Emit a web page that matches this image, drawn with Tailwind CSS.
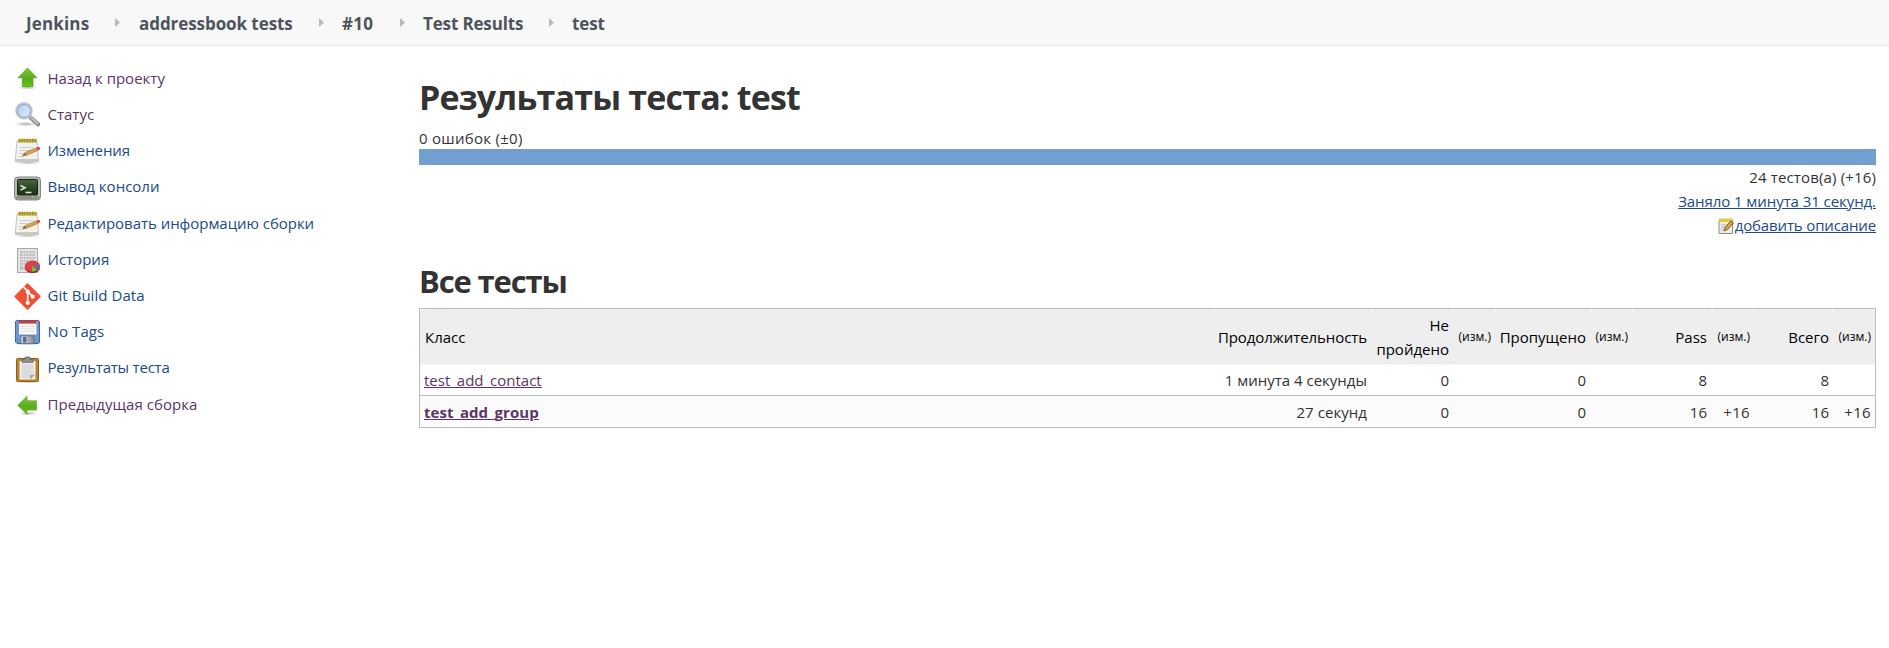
<!DOCTYPE html>
<html lang="ru">
<head>
<meta charset="utf-8">
<title>Результаты теста: test</title>
<script src="https://cdn.jsdelivr.net/npm/@tailwindcss/browser@4"></script>
</head>
<body class="bg-white font-['Open_Sans','Noto_Sans',sans-serif] text-[15px] leading-6 text-[#333] whitespace-nowrap overflow-hidden">

<svg class="absolute size-0">
  <defs>
    <linearGradient id="green" x1="0" y1="0" x2="0" y2="1"><stop offset="0" stop-color="#7fc83a"/><stop offset=".55" stop-color="#5aac1c"/><stop offset="1" stop-color="#5cc60c"/></linearGradient>
    <linearGradient id="lens" x1="0" y1="0" x2="1" y2="1"><stop offset="0" stop-color="#a9c8ec"/><stop offset="1" stop-color="#e6f1fc"/></linearGradient>
    <linearGradient id="screen" x1="0" y1="0" x2="0" y2="1"><stop offset="0" stop-color="#49693a"/><stop offset=".5" stop-color="#2f4a26"/><stop offset="1" stop-color="#1c2f18"/></linearGradient>
    <linearGradient id="metal" x1="0" y1="0" x2="1" y2="0"><stop offset="0" stop-color="#dcdcdc"/><stop offset="1" stop-color="#8b8b8b"/></linearGradient>
    <radialGradient id="shade"><stop offset="0" stop-color="#000" stop-opacity=".3"/><stop offset="1" stop-color="#000" stop-opacity="0"/></radialGradient>
    <symbol id="notepad" viewBox="0 0 27 27">
      <ellipse cx="13.5" cy="24.8" rx="13" ry="1.6" fill="url(#shade)"/>
      <path d="M3 3h20l1.500 20.500H1.200z" fill="#f2f2ef" stroke="#b5b5b0" stroke-width=".8"/>
      <path d="M1.500 21h23v2.500h-23.200z" fill="#c9c9c4"/>
      <path d="M5.500 9.500h14M5.200 12.500h12M5 15.500h6M4.800 18.500h5" stroke="#cfcfcf" stroke-width="1"/>
      <rect x="4" y="1" width="19" height="3.600" rx=".5" fill="#c2b03c"/>
      <path d="M6 .5v4M8.500.5v4M11 .5v4M13.500.5v4M16 .5v4M18.500.5v4M21 .5v4" stroke="#94832a" stroke-width=".8"/>
      <path d="M8.500 17.700l2.300-3 11.700-4.900 1.300 2.600-11 4.800z" fill="#d9a552" stroke="#9a7030" stroke-width=".6"/>
      <path d="M8.500 17.700l2.300-3 1.600 2.500z" fill="#8a6a3a"/>
      <path d="M22.500 9.800l1.800-.8c1.500-.5 2.500 1.600 1.200 2.400l-1.700 1z" fill="#e0402e"/>
    </symbol>
  </defs>
</svg>

<header class="flex h-[46px] items-center border-b border-[#e8e8e8] bg-[#f8f8f8] pl-[26px] text-[17px] font-bold text-[#4d545d]">
  <span class="w-[89px] pt-[2px] tracking-[0.15px]">Jenkins</span>
  <svg class="mb-[1px] mr-[19px] h-[9px] w-[5px]" viewBox="0 0 5 9"><path d="M0 0l5 4.500-5 4.500z" fill="#b9b9b9"/></svg>
  <span class="w-[180px] pt-[2px] tracking-[-0.07px]">addressbook tests</span>
  <svg class="mb-[1px] mr-[18px] h-[9px] w-[5px]" viewBox="0 0 5 9"><path d="M0 0l5 4.500-5 4.500z" fill="#b9b9b9"/></svg>
  <span class="w-[58px] pt-[2px] tracking-[0.3px]">#10</span>
  <svg class="mb-[1px] mr-[18px] h-[9px] w-[5px]" viewBox="0 0 5 9"><path d="M0 0l5 4.500-5 4.500z" fill="#b9b9b9"/></svg>
  <span class="w-[126px] pt-[2px] tracking-[-0.15px]">Test Results</span>
  <svg class="mb-[1px] mr-[18px] h-[9px] w-[5px]" viewBox="0 0 5 9"><path d="M0 0l5 4.500-5 4.500z" fill="#b9b9b9"/></svg>
  <span class="pt-[2px] tracking-[-0.1px]">test</span>
</header>

<div class="flex">
  <nav class="flex w-[419px] shrink-0 flex-col pt-[15.500px] pl-[14px] text-[#204a87]">
    <a class="flex h-[36.200px] items-center gap-[6.500px] text-[#5c3566]">
      <svg class="size-[27px]" viewBox="0 0 27 27"><ellipse cx="13.500" cy="21.500" rx="10" ry="2" fill="url(#shade)"/><path d="M13.500 2L23 11.800h-4V20.500H8.300v-8.700H4z" fill="url(#green)" stroke="#5da02c" stroke-width=".8"/></svg>
      <span class="pb-[4px]">Назад к проекту</span></a>
    <a class="flex h-[36.200px] items-center gap-[6.500px] text-[#5c3566]">
      <svg class="size-[27px]" viewBox="0 0 27 27"><ellipse cx="12" cy="22" rx="11" ry="2.500" fill="url(#shade)"/><path d="M16.500 15.500l7.500 6.800" stroke="#858585" stroke-width="4.200" stroke-linecap="round"/><path d="M17 15.500l6.500 6" stroke="#c4c4c4" stroke-width="2" stroke-linecap="round"/><circle cx="10" cy="8.800" r="7.600" fill="url(#lens)" stroke="#c3c5c8" stroke-width="2.200"/><circle cx="10" cy="8.800" r="6.500" fill="none" stroke="#7fa6d8" stroke-width=".9"/></svg>
      <span class="pb-[4px]">Статус</span></a>
    <a class="flex h-[36.200px] items-center gap-[6.500px]">
      <svg class="size-[27px]"><use href="#notepad"/></svg>
      <span class="pb-[4px] tracking-[-0.1px]">Изменения</span></a>
    <a class="flex h-[36.200px] items-center gap-[6.500px]">
      <svg class="size-[27px]" viewBox="0 0 27 27"><rect x=".5" y="2" width="26" height="23" rx="3.500" fill="#b8b9b3" stroke="#83857e"/><path d="M2 21h23v1.500a2 2 0 0 1-2 2H4a2 2 0 0 1-2-2z" fill="#8d8f88"/><rect x="3.500" y="4.500" width="20" height="15.500" rx="1" fill="url(#screen)" stroke="#1a2416"/><path d="M6.500 10.500l4.500 2.300-4.500 2.300" fill="none" stroke="#d5ecc8" stroke-width="1.600"/><path d="M11.500 17.500h6" stroke="#d5ecc8" stroke-width="1.600"/><path d="M18.500 21v2" stroke="#8ae234" stroke-width="1"/></svg>
      <span class="pb-[4px]">Вывод консоли</span></a>
    <a class="flex h-[36.200px] items-center gap-[6.500px]">
      <svg class="size-[27px]"><use href="#notepad"/></svg>
      <span class="pb-[2px] tracking-[-0.04px]">Редактировать информацию сборки</span></a>
    <a class="flex h-[36.200px] items-center gap-[6.500px]">
      <svg class="size-[27px]" viewBox="0 0 27 27"><rect x="3.500" y="1.500" width="20" height="24" fill="#e4e4e2" stroke="#a9a9a6"/><rect x="6" y="4" width="15" height="19" fill="#bcbcba"/><path d="M6 6.500h15M6 9.500h15M6 12.500h15M6 15.500h15M6 18.500h15M9 4v19M12 4v19M15 4v19M18 4v19" stroke="#eaeaea" stroke-width=".8"/><ellipse cx="18.500" cy="20.500" rx="7.500" ry="5.500" fill="#a81e1e"/><ellipse cx="18.500" cy="19" rx="7.500" ry="5.500" fill="#dc4242"/><path d="M18.500 18.500L25.700 18.300c.3 2.500-1 4-2.700 5z" fill="#4a76b8"/><path d="M18.500 18.500l4.500 4.800c-1.500 1-3.500 1.200-5.200 1.200z" fill="#73c22a"/></svg>
      <span class="pb-[4px]">История</span></a>
    <a class="flex h-[36.200px] items-center gap-[6.500px]">
      <svg class="size-[27px]" viewBox="0 0 27 27"><rect x="3.900" y="3.900" width="19.200" height="19.200" rx="1.200" fill="#f05033" transform="rotate(45 13.500 13.500)"/><path d="M9.700 4.200l4 4v12M13.700 8.700l5 5" fill="none" stroke="#fff" stroke-width="1.700"/><circle cx="13.700" cy="8.700" r="2.100" fill="#fff"/><circle cx="18.600" cy="13.700" r="2.100" fill="#fff"/><circle cx="13.700" cy="20" r="2.100" fill="#fff"/></svg>
      <span class="pb-[4px] tracking-[0.05px]">Git Build Data</span></a>
    <a class="flex h-[36.200px] items-center gap-[6.500px]">
      <svg class="size-[27px]" viewBox="0 0 27 27"><ellipse cx="13.500" cy="25" rx="13" ry="1.500" fill="url(#shade)"/><path d="M2.500 1.500h22l1 1v21l-1 1H3l-1.500-1.500V2.500z" fill="#6f97cf" stroke="#41659e"/><rect x="5" y="2" width="17.500" height="13.500" fill="#fafafa"/><rect x="5" y="2" width="17.500" height="2.600" fill="#e2362a"/><path d="M6.500 7.500h14.500M6.500 10h14.500M6.500 12.500h14.500" stroke="#d6d6d6" stroke-width=".8"/><rect x="7" y="17" width="13" height="7.500" fill="url(#metal)" stroke="#5f6f86" stroke-width=".7"/><rect x="9" y="18" width="3.300" height="5.500" fill="#4e6fa4"/></svg>
      <span class="pb-[4px] tracking-[0.1px]">No Tags</span></a>
    <a class="flex h-[36.200px] items-center gap-[6.500px]">
      <svg class="size-[27px]" viewBox="0 0 27 27"><ellipse cx="13.500" cy="26" rx="11" ry="1" fill="url(#shade)"/><rect x="2.500" y="2.500" width="22" height="23" rx="1" fill="#bb8130" stroke="#8f5f1d"/><path d="M5.500 5h16v18.500h-16z" fill="#f0f0ee"/><path d="M7.500 8h12v11l-3 3h-9z" fill="#dcdcda"/><path d="M21.500 18.500l-5.500 5v-4.200z" fill="#a6a6a3"/><path d="M8 6.500V3.500h3V1h5v2.500h3v3z" fill="#8f908c" stroke="#63645f" stroke-width=".7"/></svg>
      <span class="pb-[4px] tracking-[-0.22px]">Результаты теста</span></a>
    <a class="flex h-[36.200px] items-center gap-[6.500px] text-[#5c3566]">
      <svg class="size-[27px]" viewBox="0 0 27 27"><ellipse cx="14" cy="21.500" rx="9" ry="2" fill="url(#shade)"/><path d="M3.800 13.300L13 4.300v4.500h9.500v9.300H13v4.400z" fill="url(#green)" stroke="#6aac35" stroke-width=".8"/></svg>
      <span class="pb-[2px] tracking-[0.04px]">Предыдущая сборка</span></a>
  </nav>

  <main class="w-[1457px] pt-[31px]">
    <h1 class="text-[34px] leading-10 font-bold tracking-[-0.82px]">Результаты теста: test</h1>
    <div class="mt-[9px] h-[23px] leading-[25px] tracking-[0.28px]">0 ошибок (±0)</div>
    <div class="h-4 bg-[#729fcf]"></div>
    <div class="flex flex-col items-end">
      <div class="tracking-[0.15px]">24 тестов(а) (+16)</div>
      <a class="text-[#204a87] tracking-[-0.07px] underline">Заняло 1 минута 31 секунд.</a>
      <a class="flex items-center text-[#204a87]">
        <svg class="mt-[2px] mr-[1px] h-[17px] w-4" viewBox="0 0 16 17"><path d="M1 2.500h13.500v13H1z" fill="#ecece8" stroke="#8e8e88"/><path d="M3 7h8M3 9.500h6M3 12h4" stroke="#b9b9b9"/><rect x="1" y=".5" width="13.500" height="3.500" fill="#e3c93a"/><path d="M6 13l1.300-4L13 3l2.500 2-5.800 6.500z" fill="#d5a04a" stroke="#6e4d1a" stroke-width=".8"/></svg>
        <span class="tracking-[-0.14px] underline">добавить описание</span></a>
    </div>
    <h2 class="mt-[26px] text-[31px] leading-9 font-bold tracking-[-1.15px]">Все тесты</h2>

    <table class="mt-[9px] w-full table-fixed border-separate border-spacing-0 border border-[#bbb] text-right">
      <colgroup><col class="w-[794px]"><col class="w-[158px]"><col class="w-[81px]"><col class="w-[42px]"><col class="w-[96px]"><col class="w-[42px]"><col class="w-[79px]"><col class="w-[42px]"><col class="w-[79px]"><col></colgroup>
      <thead class="text-black">
        <tr class="h-[56px]">
          <th class="rounded-t-[3px] border-b border-[#f8f8f8] bg-[#eee] pl-[5px] text-left font-normal">Класс</th>
          <th class="rounded-t-[3px] border-b border-[#f8f8f8] bg-[#eee] pr-[5px] font-normal tracking-[-0.08px]">Продолжительность</th>
          <th class="rounded-t-[3px] border-b border-[#f8f8f8] bg-[#eee] pr-1 font-normal">Не<br>пройдено</th>
          <th class="rounded-t-[3px] border-b border-[#f8f8f8] bg-[#eee] pr-1 text-xs font-normal">(изм.)</th>
          <th class="rounded-t-[3px] border-b border-[#f8f8f8] bg-[#eee] pr-[5px] font-normal">Пропущено</th>
          <th class="rounded-t-[3px] border-b border-[#f8f8f8] bg-[#eee] pr-[5px] text-xs font-normal">(изм.)</th>
          <th class="rounded-t-[3px] border-b border-[#f8f8f8] bg-[#eee] pr-[5px] font-normal">Pass</th>
          <th class="rounded-t-[3px] border-b border-[#f8f8f8] bg-[#eee] pr-1 text-xs font-normal">(изм.)</th>
          <th class="rounded-t-[3px] border-b border-[#f8f8f8] bg-[#eee] pr-1 font-normal">Всего</th>
          <th class="rounded-t-[3px] border-b border-[#f8f8f8] bg-[#eee] pr-1 text-xs font-normal">(изм.)</th>
        </tr>
      </thead>
      <tbody>
        <tr class="h-[30px]">
          <td class="pl-1 text-left"><a class="text-[#5c3566] underline">test_add_contact</a></td>
          <td class="pr-[5px]">1 минута 4 секунды</td><td class="pr-1">0</td><td></td><td class="pr-[5px]">0</td><td></td><td class="pr-[5px]">8</td><td></td><td class="pr-1">8</td><td></td>
        </tr>
        <tr class="h-8 bg-[#fbfbfb]">
          <td class="border-t border-[#bbb] pl-1 text-left font-bold"><a class="tracking-[0.08px] text-[#5c3566] underline">test_add_group</a></td>
          <td class="border-t border-[#bbb] pr-[5px] tracking-[0.06px]">27 секунд</td><td class="border-t border-[#bbb] pr-1">0</td><td class="border-t border-[#bbb]"></td><td class="border-t border-[#bbb] pr-[5px]">0</td><td class="border-t border-[#bbb]"></td><td class="border-t border-[#bbb] pr-[5px]">16</td><td class="border-t border-[#bbb] pr-1 tracking-[0.3px]">+16</td><td class="border-t border-[#bbb] pr-1">16</td><td class="border-t border-[#bbb] pr-1 tracking-[0.3px]">+16</td>
        </tr>
      </tbody>
    </table>
  </main>
</div>
</body>
</html>
